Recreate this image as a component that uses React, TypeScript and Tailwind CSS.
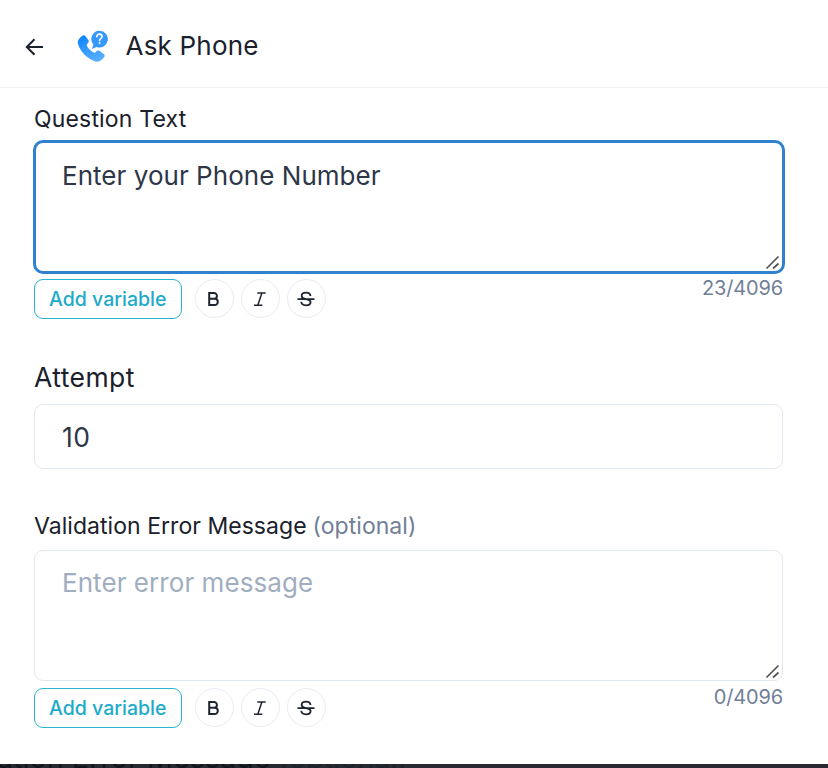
import React from "react";

function PhoneIcon() {
  return (
    <svg className="block h-8 w-8" viewBox="0 0 32 32" fill="none">
      <defs>
        <linearGradient id="handset" x1="8" y1="4" x2="22" y2="32" gradientUnits="userSpaceOnUse">
          <stop stopColor="#0a84ff" />
          <stop offset="1" stopColor="#5fb2ff" />
        </linearGradient>
      </defs>
      <path
        d="M2.6 8.2 5.2 5.8C6.2 5 7.6 5.1 8.4 6.1L11.3 10.1C12 11 11.900 12.100 11.100 12.900L10 14.300C9.600 14.900 9.700 15.600 10.100 16.200 11.600 18.800 14 21.100 16.600 22.400 17.300 22.800 18 22.700 18.500 22.200L19.800 21C20.600 20.300 21.800 20.300 22.600 20.900L26.800 23.900C27.800 24.600 28 26 27.200 27L25.300 29.300C23.200 31.700 20.200 32.300 17.200 31.100 9.800 28.200 3.600 21.900 1.200 14.600.4 12.100.8 10 2.600 8.200Z"
        fill="url(#handset)"
      />
      <path d="M22.500.700a8.400 8.400 0 1 1-3 16.250L15 19l1.400-4.400A8.400 8.400 0 0 1 22.500.700Z" fill="#3499f8" />
      <path
        d="M19.900 6.800c0-1.700 1.100-2.700 2.600-2.700s2.600 1 2.600 2.400c0 2-2.500 2-2.500 4"
        stroke="#fff"
        strokeWidth="1.600"
        strokeLinecap="round"
      />
      <circle cx="22.600" cy="12.900" r=".95" fill="#fff" />
    </svg>
  );
}

function ResizeGrip() {
  return (
    <svg className="block h-4 w-4" viewBox="0 0 16 16" stroke="#555" strokeWidth="1.700">
      <path d="M1.500 13.500 13.500 1.500M8 13.500 13.500 8.500" />
    </svg>
  );
}

const round = "flex h-[39px] w-[39px] items-center justify-center rounded-full border-[1.500px] border-[#e8ecf3] text-[#1f2530]";

function Toolbar({ count }: { count: string }) {
  return (
    <div className="flex items-start justify-between">
      <div className="mt-[5px] flex items-start">
        <button className="mr-[13px] h-[40px] w-[147.500px] whitespace-nowrap rounded-[9px] border-[1.500px] border-[#28b5cd] pt-[1.500px] text-[19.500px] font-medium leading-none text-[#1cabc8]">
          Add variable
        </button>
        <div className="flex gap-[7px]">
          <button className={round}>
            <svg width="14" height="16" viewBox="0 0 14 16" fill="none" stroke="currentColor" strokeWidth="2">
              <path d="M2.200 2h4.800a2.900 2.900 0 0 1 0 5.800H2.200zM2.200 7.800h5.500a3.100 3.100 0 0 1 0 6.200H2.200z" />
            </svg>
          </button>
          <button className={round}>
            <svg width="14" height="16" viewBox="0 0 14 16" fill="none" stroke="currentColor" strokeWidth="1.500">
              <path d="M4.300 2h8.400M1 14.200h8.400M8.900 2 4.800 14.200" />
            </svg>
          </button>
          <button className={round}>
            <svg width="18" height="16" viewBox="0 0 18 16" fill="none" stroke="currentColor" strokeWidth="1.800">
              <path d="M13.500 5C13.300 2.900 11.500 1.700 9.200 1.700 6.700 1.700 4.700 3 4.700 5c0 1.300.9 2.200 2.700 2.700l3.400.9c1.900.5 2.800 1.200 2.800 2.400 0 2-1.900 3.300-4.500 3.300-2.700 0-4.700-1.300-4.800-3.500M.5 8.200h17" />
            </svg>
          </button>
        </div>
      </div>
      <span className="mt-[1px] text-[20px] leading-[26px] tracking-[-0.150px] text-[#718096]">{count}</span>
    </div>
  );
}

export default function App() {
  return (
    <div className="relative h-[768px] w-[828px] overflow-hidden bg-white font-[Inter,sans-serif] text-[#1a202c]">
      <header className="flex h-[88px] items-center border-b border-[#edf2f4]">
        <svg className="ml-[25px] mt-[6px] h-[18px] w-[19px]" viewBox="0 0 19 18" fill="none" stroke="#1a202c" strokeWidth="2">
          <path d="M18 9H2M9.500 1.200 1.800 9l7.700 7.800" />
        </svg>
        <div className="ml-[33px] mt-[5px]">
          <PhoneIcon />
        </div>
        <h1 className="ml-[16.500px] mt-[5px] text-[26px] leading-[32px] tracking-[0.200px]">Ask Phone</h1>
      </header>
      <main className="flex h-[676px] flex-col pl-[34px] pr-[45px]">
        <label className="mt-[15.500px] h-[30px] text-[23px] leading-[30px] tracking-[0.170px]">Question Text</label>
        <div className="-ml-[1px] mt-[6.500px] flex h-[134px] w-[752px] items-end justify-between rounded-[10px] border-[3px] border-[#3182ce] pl-[26px] pr-[1px] text-[#2d3748]">
          <p className="mb-[77px] text-[26px] leading-[36px] tracking-[0.040px]">Enter your Phone Number</p>
          <ResizeGrip />
        </div>
        <Toolbar count="23/4096" />
        <label className="mt-[41px] h-[34px] text-[26.500px] leading-[34px] tracking-[0.450px]">Attempt</label>
        <div className="mt-[10px] flex h-[65px] shrink-0 items-center rounded-[9px] border border-[#e2e8f0] pl-[27px] pt-[2px] text-[26.500px] tracking-[0.500px] text-[#2d3748]">
          10
        </div>
        <label className="mt-[42px] h-[30px] text-[23px] leading-[30px] tracking-[0.040px]">
          Validation Error Message <span className="-ml-[0.500px] text-[#718096]">(optional)</span>
        </label>
        <div className="mb-[2px] mt-[9px] flex h-[131px] items-end justify-between rounded-[9px] border border-[#e2e8f0] pl-[27px] pr-[1px] text-[#a0aec0]">
          <p className="mb-[79px] text-[26px] leading-[36px] tracking-[0.060px]">Enter error message</p>
          <ResizeGrip />
        </div>
        <Toolbar count="0/4096" />
      </main>
      <footer className="h-[4px] overflow-hidden bg-[#292a31]">
        <p className="-ml-[69px] -mt-[23px] whitespace-nowrap text-[28.750px] leading-[34px] text-[#10171c]">
          Validation Error Message <span className="text-[#1c242c]">(optional)</span>
        </p>
      </footer>
    </div>
  );
}
